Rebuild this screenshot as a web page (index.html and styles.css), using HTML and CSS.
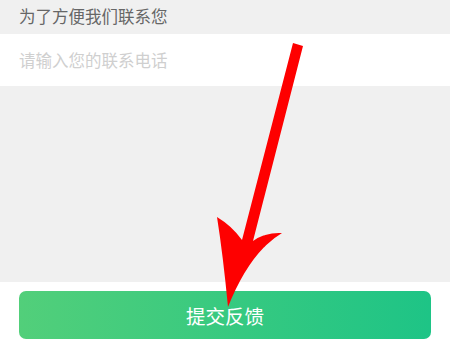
FILE: index.html
```html
<!DOCTYPE html>
<html lang="zh-CN">
<head>
    <meta charset="UTF-8">
    <meta name="viewport" content="width=device-width, initial-scale=1.0">
    <title>意见反馈</title>
    <link rel="stylesheet" href="styles.css">
</head>
<body>
    <div class="page">
        <div class="section-title">为了方便我们联系您</div>
        <div class="input-row">
            <input type="tel" class="phone-input" placeholder="请输入您的联系电话">
        </div>
        <div class="blank"></div>
        <div class="footer">
            <button type="button" class="submit-btn">提交反馈</button>
        </div>
    </div>

    <!-- red arrow drawn over the page -->
    <svg class="arrow" width="454" height="347" viewBox="0 0 454 347">
        <path d="M 293 43 L 303 46 L 253 241 Q 266 232 282 233 Q 250 252 228 307 Q 223 255 217 217 Q 232 226 242 240 Z" fill="#fe0000"/>
    </svg>
</body>
</html>
```

FILE: styles.css
```css
body {
    margin: 0;
    padding: 0;
    width: 454px;
    height: 347px;
    overflow: hidden;
    background-color: #fff;
    font-family: "Noto Sans CJK SC", "Noto Sans", sans-serif;
    position: relative;
}

.page {
    width: 450px;
}

.section-title {
    height: 34px;
    line-height: 32px;
    padding-left: 19px;
    background-color: #f0f0f0;
    color: #666;
    font-size: 16.5px;
}

.input-row {
    height: 52px;
    display: flex;
    align-items: center;
    background-color: #fff;
}

.phone-input {
    border: none;
    outline: none;
    width: 100%;
    padding: 0 19px;
    margin-top: -1px;
    font-family: inherit;
    font-size: 16.5px;
    color: #333;
    background: transparent;
}

.phone-input::placeholder {
    color: #cfcfcf;
}

.blank {
    height: 196px;
    background-color: #f0f0f0;
}

.footer {
    padding: 9px 19px 0;
}

.submit-btn {
    display: block;
    width: 100%;
    height: 48px;
    border: none;
    border-radius: 7px;
    background: linear-gradient(to right, #52cf7a, #1ec486);
    color: #fff;
    font-family: inherit;
    font-size: 19.5px;
    cursor: pointer;
}

.arrow {
    position: absolute;
    top: 0;
    left: 0;
}
```
